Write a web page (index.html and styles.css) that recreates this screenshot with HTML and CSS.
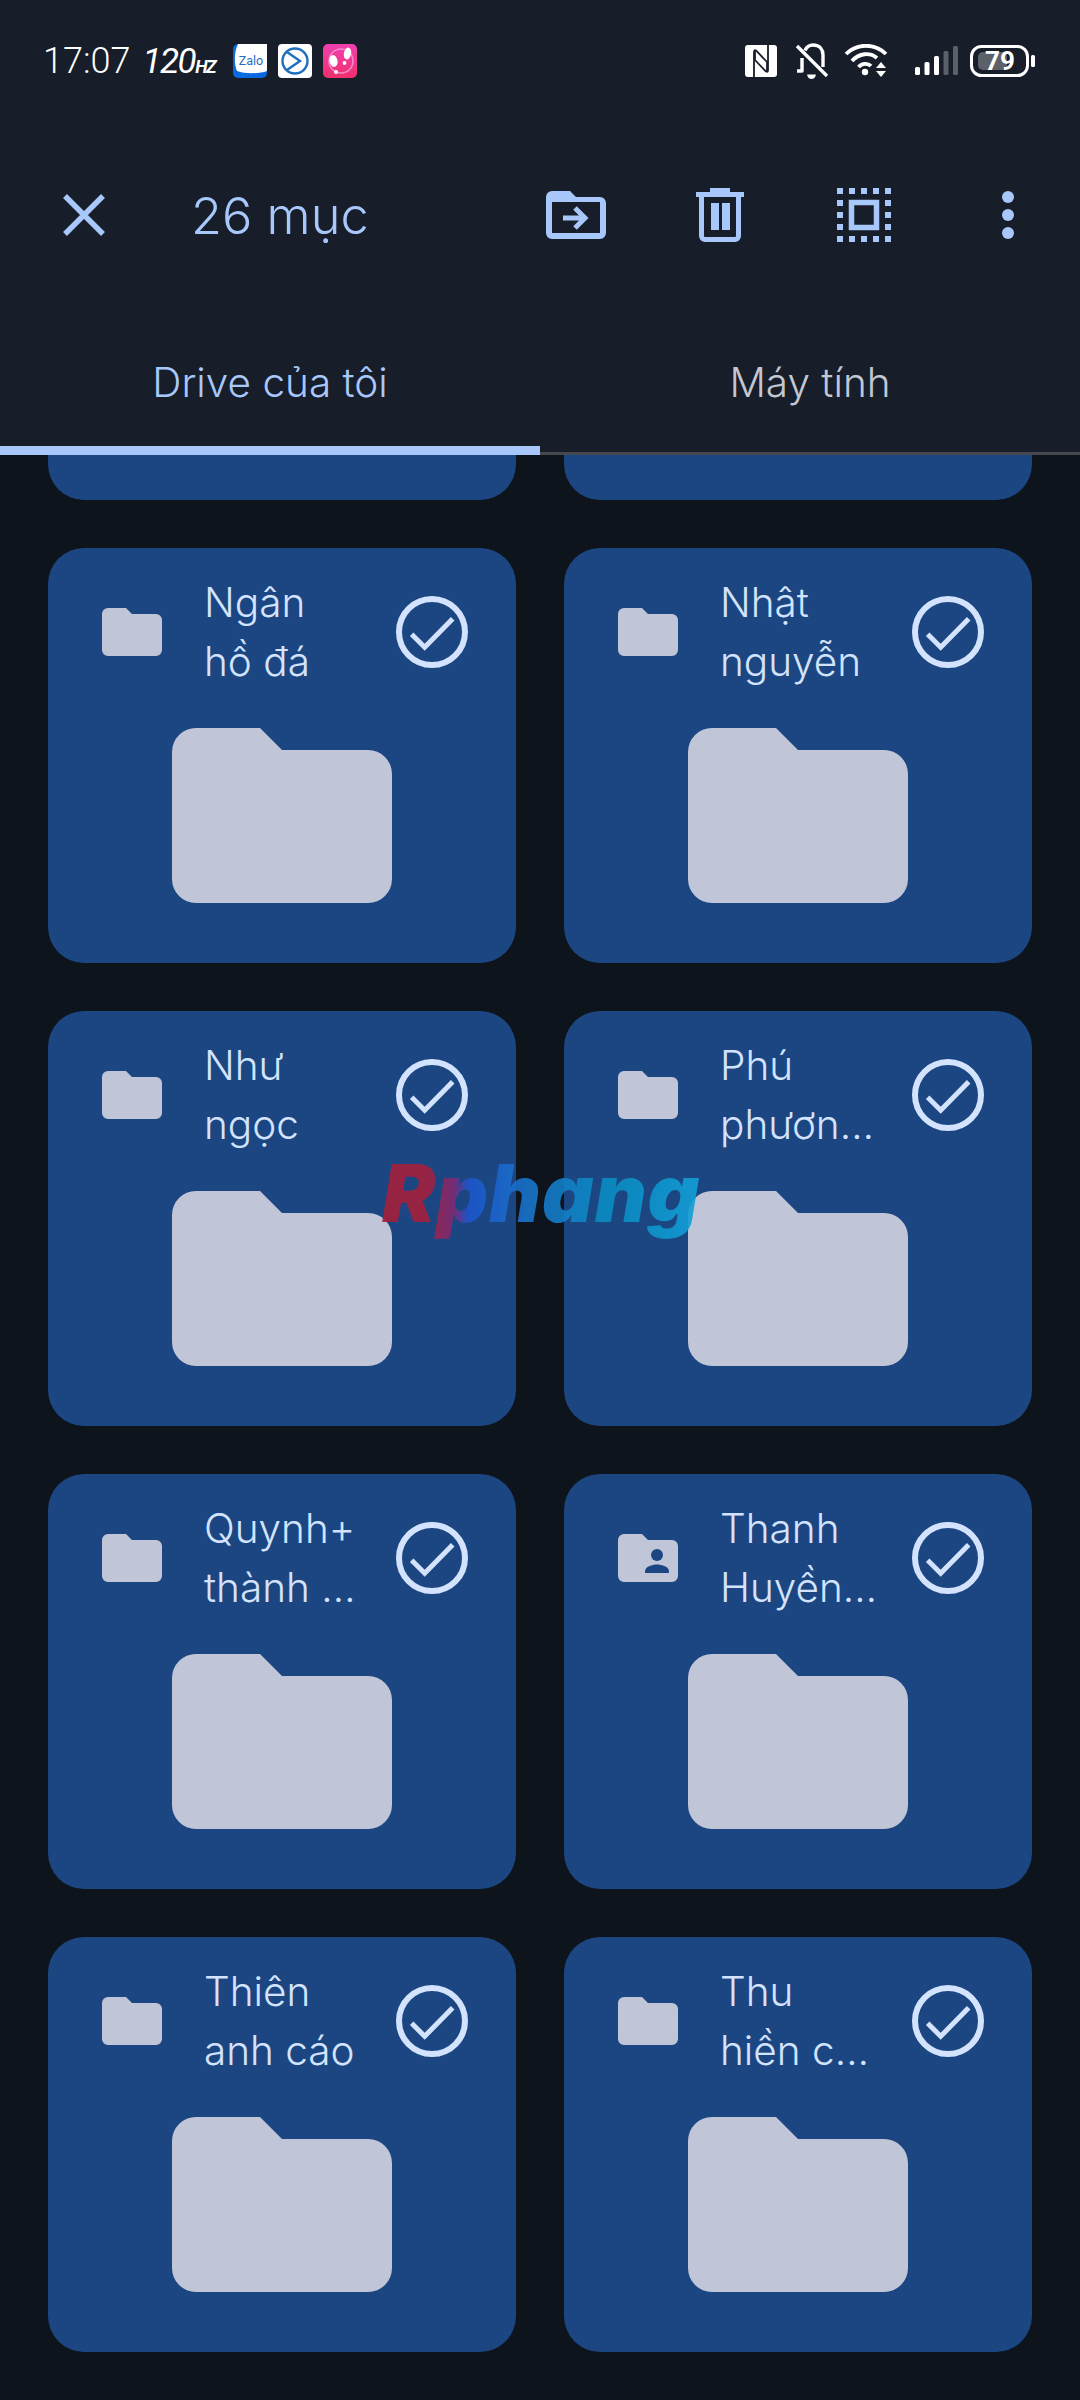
FILE: index.html
```html
<!DOCTYPE html>
<html lang="vi">
<head>
    <meta charset="UTF-8">
    <meta name="viewport" content="width=device-width, initial-scale=1.0">
    <title>Drive của tôi</title>
    <link rel="stylesheet" href="styles.css">
</head>
<body>

    <svg class="defs" width="0" height="0">
        <symbol id="folder-big" viewBox="0 0 220 175">
            <path d="M24 0H88L110 22H196a24 24 0 0 1 24 24V151a24 24 0 0 1-24 24H24a24 24 0 0 1-24-24V24A24 24 0 0 1 24 0Z"/>
        </symbol>
        <symbol id="folder-small" viewBox="0 0 60 48">
            <path d="M6 0H24L30 6H54a6 6 0 0 1 6 6V42a6 6 0 0 1-6 6H6a6 6 0 0 1-6-6V6a6 6 0 0 1 6-6Z"/>
        </symbol>
        <symbol id="check" viewBox="0 0 72 72">
            <circle cx="36" cy="36" r="33" fill="none" stroke="currentColor" stroke-width="6"/>
            <path d="M15.7 38.3L28.7 51.3L56.7 22.7" fill="none" stroke="currentColor" stroke-width="5"/>
        </symbol>
    </svg>

    <header class="top">
        <div class="status">
            <div class="status-left">
                <span class="time">17:07</span>
                <span class="rate">120<small>HZ</small></span>
                <svg class="app-icon rate-gap" viewBox="0 0 34 34">
                    <rect width="34" height="34" rx="5" fill="#0a68e0"/>
                    <path d="M5 0H34V27C26 30 12 30 4 27C1 20 1 8 5 0Z" fill="#fff"/>
                    <text x="18" y="21" class="zalo-text" text-anchor="middle">Zalo</text>
                </svg>
                <svg class="app-icon" viewBox="0 0 34 34">
                    <rect width="34" height="34" rx="4" fill="#fff"/>
                    <circle cx="17" cy="17" r="12.5" fill="none" stroke="#1f6fbe" stroke-width="2.4"/>
                    <path d="M9 8L22 17L9 26" fill="none" stroke="#1f6fbe" stroke-width="2.4"/>
                </svg>
                <svg class="app-icon" viewBox="0 0 34 34">
                    <defs>
                        <linearGradient id="pink" x1="0" y1="0" x2="0" y2="1">
                            <stop offset="0" stop-color="#f040b0"/>
                            <stop offset="1" stop-color="#f0306c"/>
                        </linearGradient>
                    </defs>
                    <rect width="34" height="34" rx="5" fill="url(#pink)"/>
                    <circle cx="18" cy="17" r="12" fill="none" stroke="#f78ccb" stroke-width="1.5"/>
                    <ellipse cx="24.5" cy="9.5" rx="3.6" ry="6" fill="#fff" transform="rotate(12 24.5 9.5)"/>
                    <circle cx="21.5" cy="19" r="1.9" fill="#fff"/>
                    <ellipse cx="10.5" cy="17" rx="4" ry="6" fill="#fff" transform="rotate(-12 10.5 17)"/>
                    <circle cx="13" cy="28" r="2" fill="#fff"/>
                </svg>
            </div>
            <div class="status-right">
                <svg class="st-nfc" viewBox="0 0 32 32">
                    <rect width="32" height="32" rx="3" fill="#fff"/>
                    <path d="M9 32V7q0-3 2.500-1L22 17V26" fill="none" stroke="#171d29" stroke-width="1.800"/>
                    <path d="M23 0V25q0 3-2.500 1L10 15V6" fill="none" stroke="#171d29" stroke-width="1.800"/>
                </svg>
                <svg class="st-bell" viewBox="0 0 34 36">
                    <path d="M7 15V28H2M10 7.500C12 3 15 2 18 2C25 2 28 7 28 12V24" fill="none" stroke="#fff" stroke-width="3.400" stroke-linejoin="round"/>
                    <path d="M2 3L32 33" stroke="#fff" stroke-width="3.400"/>
                    <path d="M12 31.500h9c-.5 3-2.500 4.500-4.500 4.500s-4-1.500-4.500-4.500Z" fill="#fff"/>
                </svg>
                <svg class="st-wifi" viewBox="0 0 44 34">
                    <g fill="none" stroke="#fff" stroke-width="3.800">
                        <path d="M2 10C13 -1 31 -1 42 10"/>
                        <path d="M8 17C15 9 26 8 33 14"/>
                        <path d="M14.500 23C18 19 24 19 27 22"/>
                    </g>
                    <circle cx="21" cy="28" r="3.200" fill="#fff"/>
                    <path d="M37 18L42 24H32Z" fill="#fff"/>
                    <path d="M32 27H42L37 33Z" fill="#fff"/>
                </svg>
                <svg class="st-signal" viewBox="0 0 44 30">
                    <g fill="#fff">
                        <rect x="1" y="21" width="5" height="8" rx="1.500"/>
                        <rect x="10.500" y="16" width="5" height="13" rx="1.500"/>
                        <rect x="20" y="10" width="5" height="19" rx="1.500"/>
                    </g>
                    <g fill="#5b6069">
                        <rect x="29.500" y="5" width="5" height="24" rx="1.500"/>
                        <rect x="39" y="0" width="5" height="29" rx="1.500"/>
                    </g>
                </svg>
                <svg class="st-battery" viewBox="0 0 65 32">
                    <rect x="1.500" y="1.500" width="56" height="29" rx="10" fill="none" stroke="#fff" stroke-width="3"/>
                    <rect x="8" y="7" width="29" height="18" rx="5" fill="#5b6069"/>
                    <rect x="61" y="10" width="4" height="12" rx="1.500" fill="#fff"/>
                    <text x="30" y="25" class="battery-text" text-anchor="middle">79</text>
                </svg>
            </div>
        </div>

        <div class="toolbar">
            <button class="tool tool-close" aria-label="Đóng">
                <svg width="42" height="42" viewBox="0 0 42 42">
                    <path d="M2 2L40 40M40 2L2 40" stroke="currentColor" stroke-width="5.500" fill="none"/>
                </svg>
            </button>
            <h1 class="title">26 mục</h1>
            <div class="actions">
                <button class="tool" aria-label="Di chuyển">
                    <svg width="60" height="48" viewBox="0 0 60 48">
                        <path fill="currentColor" fill-rule="evenodd" d="M6 0H24L30 6H54a6 6 0 0 1 6 6V42a6 6 0 0 1-6 6H6a6 6 0 0 1-6-6V6a6 6 0 0 1 6-6ZM6 11V42H54V11Z"/>
                        <path d="M17 27H38M29 17L39 27L29 37" fill="none" stroke="currentColor" stroke-width="5"/>
                    </svg>
                </button>
                <button class="tool" aria-label="Xóa">
                    <svg width="48" height="54" viewBox="0 0 48 54">
                        <path fill="currentColor" d="M14 0H34V4H48V9H0V4H14Z"/>
                        <path d="M5.500 9V48a3.500 3.500 0 0 0 3.500 3.500H39a3.500 3.500 0 0 0 3.500-3.500V9" fill="none" stroke="currentColor" stroke-width="5"/>
                        <rect x="15" y="15" width="8" height="27" fill="currentColor"/>
                        <rect x="26" y="15" width="8" height="27" fill="currentColor"/>
                    </svg>
                </button>
                <button class="tool" aria-label="Chọn tất cả">
                    <svg width="54" height="54" viewBox="0 0 54 54">
                        <rect x="3" y="3" width="48" height="48" fill="none" stroke="currentColor" stroke-width="6" stroke-dasharray="6 6" stroke-dashoffset="3"/>
                        <rect x="14.500" y="14.500" width="25" height="25" fill="none" stroke="currentColor" stroke-width="5.500"/>
                    </svg>
                </button>
                <button class="tool" aria-label="Thêm">
                    <svg width="12" height="48" viewBox="0 0 12 48">
                        <circle cx="6" cy="6" r="6" fill="currentColor"/>
                        <circle cx="6" cy="24" r="6" fill="currentColor"/>
                        <circle cx="6" cy="42" r="6" fill="currentColor"/>
                    </svg>
                </button>
            </div>
        </div>

        <nav class="tabs">
            <a class="tab active">Drive của tôi</a>
            <a class="tab">Máy tính</a>
        </nav>
    </header>

    <main class="grid">
        <div class="card card-cut"></div>
        <div class="card card-cut"></div>

        <article class="card">
            <div class="card-head">
                <svg class="icon-small"><use href="#folder-small"/></svg>
                <div class="name"><span>Ngân</span><span>hồ đá</span></div>
                <svg class="icon-check"><use href="#check"/></svg>
            </div>
            <svg class="icon-big"><use href="#folder-big"/></svg>
        </article>
        <article class="card">
            <div class="card-head">
                <svg class="icon-small"><use href="#folder-small"/></svg>
                <div class="name"><span>Nhật</span><span>nguyễn</span></div>
                <svg class="icon-check"><use href="#check"/></svg>
            </div>
            <svg class="icon-big"><use href="#folder-big"/></svg>
        </article>

        <article class="card">
            <div class="card-head">
                <svg class="icon-small"><use href="#folder-small"/></svg>
                <div class="name"><span>Như</span><span>ngọc</span></div>
                <svg class="icon-check"><use href="#check"/></svg>
            </div>
            <svg class="icon-big"><use href="#folder-big"/></svg>
        </article>
        <article class="card">
            <div class="card-head">
                <svg class="icon-small"><use href="#folder-small"/></svg>
                <div class="name"><span>Phú</span><span>phươn…</span></div>
                <svg class="icon-check"><use href="#check"/></svg>
            </div>
            <svg class="icon-big"><use href="#folder-big"/></svg>
        </article>

        <article class="card">
            <div class="card-head">
                <svg class="icon-small"><use href="#folder-small"/></svg>
                <div class="name"><span>Quynh+</span><span>thành …</span></div>
                <svg class="icon-check"><use href="#check"/></svg>
            </div>
            <svg class="icon-big"><use href="#folder-big"/></svg>
        </article>
        <article class="card">
            <div class="card-head">
                <svg class="icon-small" viewBox="0 0 60 48">
                    <use href="#folder-small" width="60" height="48"/>
                    <circle class="person" cx="39" cy="21" r="6"/>
                    <path class="person" d="M27 39V37.500C27 32.500 34 30.500 39 30.500S51 32.500 51 37.500V39Z"/>
                </svg>
                <div class="name"><span>Thanh</span><span>Huyền…</span></div>
                <svg class="icon-check"><use href="#check"/></svg>
            </div>
            <svg class="icon-big"><use href="#folder-big"/></svg>
        </article>

        <article class="card">
            <div class="card-head">
                <svg class="icon-small"><use href="#folder-small"/></svg>
                <div class="name"><span>Thiên</span><span>anh cáo</span></div>
                <svg class="icon-check"><use href="#check"/></svg>
            </div>
            <svg class="icon-big"><use href="#folder-big"/></svg>
        </article>
        <article class="card">
            <div class="card-head">
                <svg class="icon-small"><use href="#folder-small"/></svg>
                <div class="name"><span>Thu</span><span>hiền c…</span></div>
                <svg class="icon-check"><use href="#check"/></svg>
            </div>
            <svg class="icon-big"><use href="#folder-big"/></svg>
        </article>
    </main>

    <div class="watermark">Rphang</div>

</body>
</html>
```

FILE: styles.css
```css
/* Page */
body {
    margin: 0;
    width: 1080px;
    height: 2400px;
    overflow: hidden;
    position: relative;
    background: #0d141c;
    font-family: 'Inter', 'Roboto', sans-serif;
    color: #fff;
}

.defs {
    display: block;
    height: 0;
}

/* Header */
.top {
    background: #171d29;
    height: 455px;
}

.status {
    height: 122px;
    padding: 0 45px 0 43px;
    display: flex;
    align-items: center;
    justify-content: space-between;
    box-sizing: border-box;
}

.status-left,
.status-right {
    display: flex;
    align-items: center;
}

.time {
    font-family: 'Roboto', sans-serif;
    font-size: 36px;
    font-weight: 300;
}

.rate {
    margin-left: 12px;
    font-family: 'Roboto', sans-serif;
    font-size: 35px;
    font-weight: 400;
    font-style: italic;
    letter-spacing: -1.500px;
}

.rate small {
    font-size: 18px;
    font-weight: 700;
}

.app-icon {
    width: 34px;
    height: 34px;
    margin-right: 11px;
}

.rate-gap {
    margin-left: 18px;
}

.zalo-text {
    font-family: 'Roboto', sans-serif;
    font-size: 12.500px;
    fill: #1f6fc4;
}

.st-nfc {
    width: 32px;
    height: 32px;
}

.st-bell {
    width: 34px;
    height: 36px;
    margin-left: 18px;
}

.st-wifi {
    width: 44px;
    height: 34px;
    margin-left: 15px;
}

.st-signal {
    width: 44px;
    height: 30px;
    margin-left: 26px;
}

.st-battery {
    width: 65px;
    height: 32px;
    margin-left: 12px;
}

.battery-text {
    font-family: 'Roboto', sans-serif;
    font-size: 26px;
    font-weight: 700;
    fill: #fff;
}

/* Toolbar */
.toolbar {
    height: 186px;
    display: flex;
    align-items: center;
    padding-left: 12px;
    color: #a8c8fb;
}

.tool {
    width: 144px;
    height: 100px;
    padding: 0;
    border: none;
    background: none;
    color: inherit;
    display: flex;
    align-items: center;
    justify-content: center;
}

.title {
    margin: 0 0 0 35px;
    font-size: 50.500px;
    font-weight: 300;
}

.actions {
    margin-left: auto;
    display: flex;
}

/* Tabs */
.tabs {
    height: 147px;
    display: flex;
    box-sizing: border-box;
    border-bottom: 3px solid #45494f;
}

.tab {
    flex: 1;
    padding-top: 50px;
    box-sizing: border-box;
    height: 147px;
    text-align: center;
    font-size: 40.500px;
    font-weight: 300;
    color: #c2c7d2;
}

.tab.active {
    color: #a8c8fb;
    border-bottom: 9px solid #a8c8fb;
}

/* Folder cards */
.grid {
    display: grid;
    grid-template-columns: 1fr 1fr;
    gap: 48px;
    padding: 0 48px;
}

.card {
    height: 415px;
    padding-top: 25px;
    box-sizing: border-box;
    background: #1c4682;
    border-radius: 36px;
    display: flex;
    flex-direction: column;
    align-items: center;
}

.card-cut {
    height: 45px;
    padding: 0;
    border-radius: 0 0 36px 36px;
}

.card-head {
    align-self: stretch;
    display: flex;
    align-items: center;
    padding: 0 48px 0 54px;
    margin-bottom: 37px;
}

.icon-small {
    width: 60px;
    height: 48px;
    flex: none;
    fill: #c0c6d8;
}

.person {
    fill: #1c4682;
}

.name {
    flex: 1;
    margin-left: 42px;
    font-size: 40.500px;
    font-weight: 300;
    line-height: 59px;
    color: #d3e3fd;
}

.name span {
    display: block;
    white-space: nowrap;
}

.icon-check {
    width: 72px;
    height: 72px;
    flex: none;
    color: #d3e3fd;
}

.icon-big {
    width: 220px;
    height: 175px;
    fill: #c0c6d8;
}

/* Watermark over the page */
.watermark {
    position: absolute;
    left: 382px;
    top: 1143px;
    font-family: 'Inter', sans-serif;
    font-size: 80px;
    font-weight: 900;
    font-style: italic;
    line-height: 100px;
    letter-spacing: 1px;
    background: linear-gradient(90deg, #a5203c 0, #a5203c 14%, #7a2c78 23%, #1c55cc 27%, #1a74cc 45%, #0a8cc2 70%, #12a0d8 100%);
    -webkit-background-clip: text;
    background-clip: text;
    color: transparent;
    opacity: 0.9;
}
```
